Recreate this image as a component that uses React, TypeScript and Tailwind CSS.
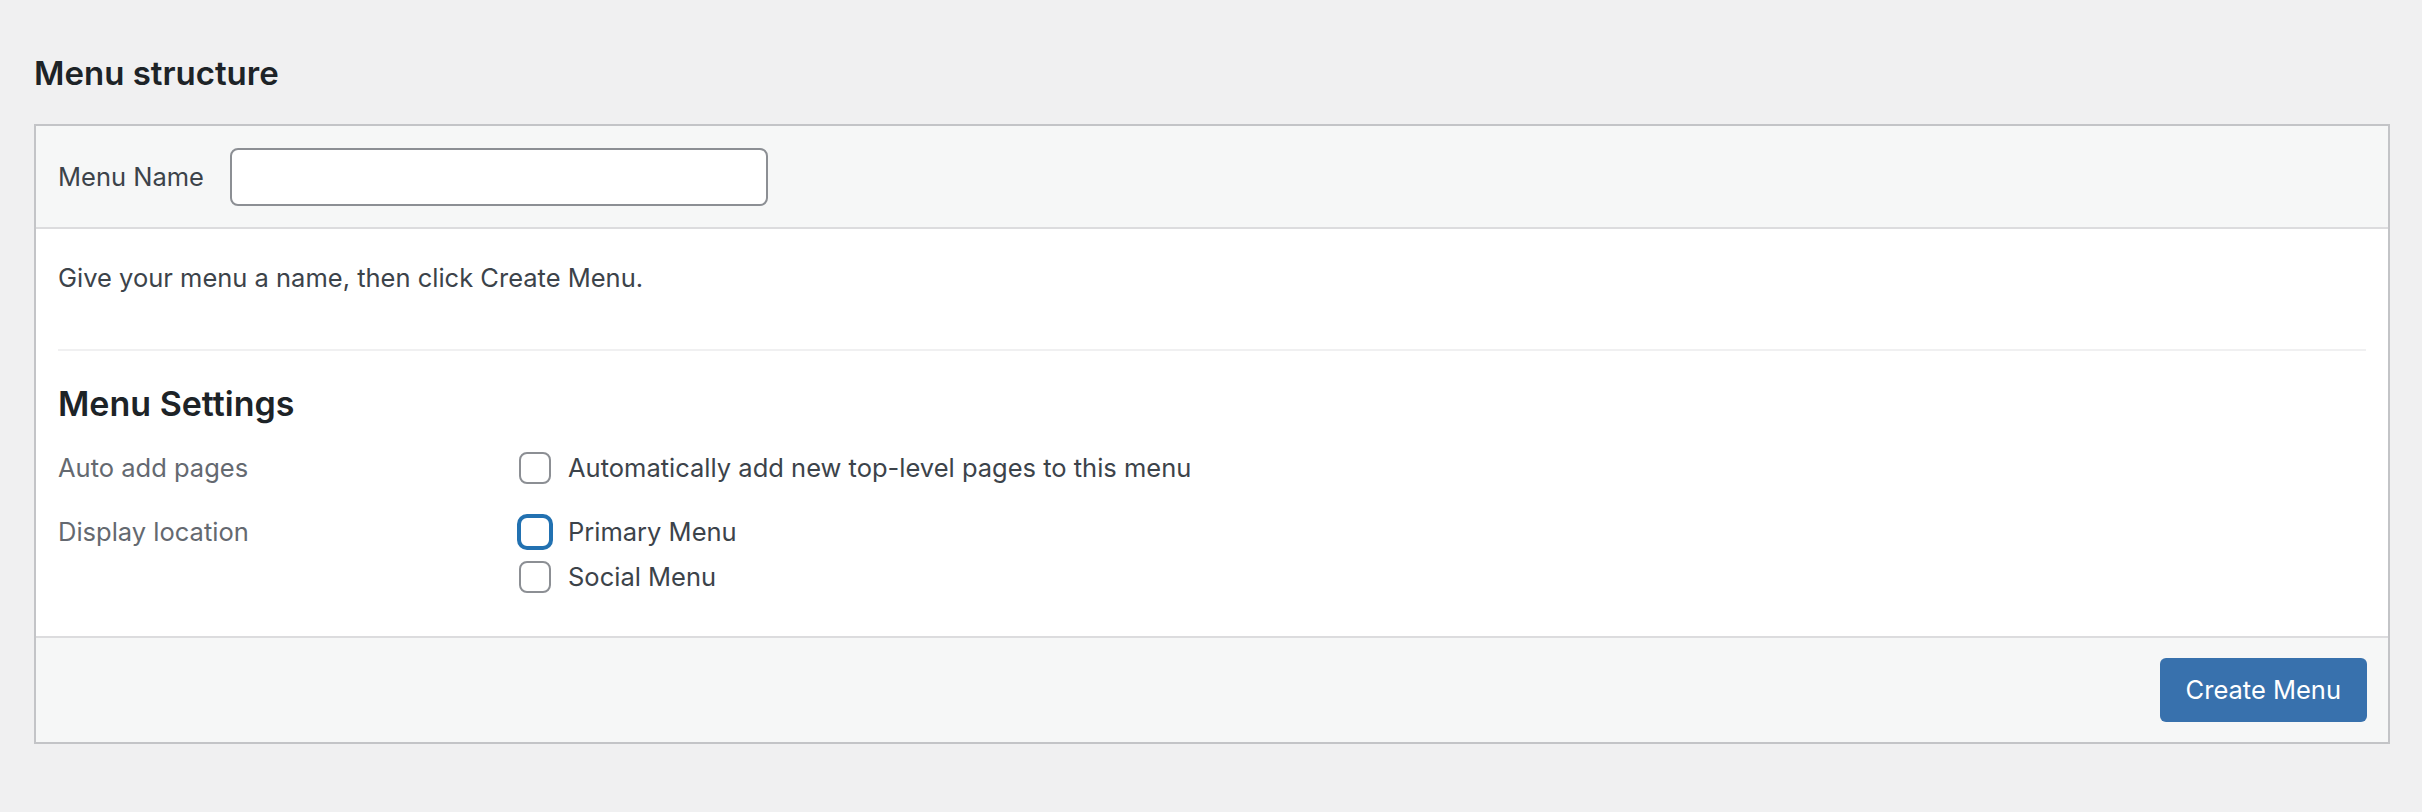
import { useState } from "react";

const font = { fontFamily: "Inter, 'Noto Sans', sans-serif" };

const Checkbox = ({ checked, focused, onChange }: { checked: boolean; focused?: boolean; onChange: () => void }) => (
  <button
    type="button"
    onClick={onChange}
    className={`w-8 h-8 shrink-0 rounded-[8px] bg-white border-2 flex items-center justify-center ${
      focused ? "border-[#2271b1] shadow-[0_0_0_2px_#2271b1]" : "border-[#8c8f94]"
    }`}
  >
    {checked && (
      <svg viewBox="0 0 20 20" className="w-7 h-7 text-[#3582c4]" fill="currentColor">
        <path d="M14.83 4.89l1.34.94-5.81 8.38H9.02L5.78 9.67l1.34-1.25 2.57 2.4z" />
      </svg>
    )}
  </button>
);

export default function App() {
  const [menuName, setMenuName] = useState<string>("");
  const [autoAdd, setAutoAdd] = useState<boolean>(false);
  const [primary, setPrimary] = useState<boolean>(false);
  const [social, setSocial] = useState<boolean>(false);

  return (
    <div className="min-h-screen bg-[#f0f0f1] pl-[34px] pr-[32px] pt-[57px] pb-[40px]" style={font}>
      <h2 className="text-[33px] leading-none font-semibold text-[#1d2327]">Menu structure</h2>

      <div className="mt-[34px] border-2 border-[#c3c4c7] bg-white">
        {/* header */}
        <div className="bg-[#f6f7f7] border-b-2 border-[#dcdcde] px-[22px] pt-[22px] pb-[21px] flex items-center gap-[26px]">
          <label className="text-[25.5px] text-[#3c434a]">Menu Name</label>
          <input
            type="text"
            value={menuName}
            onChange={(e) => setMenuName(e.target.value)}
            className="w-[538px] h-[58px] rounded-[8px] border-2 border-[#8c8f94] bg-white px-4 text-[25.5px] text-[#2c3338] outline-none"
          />
        </div>

        {/* body */}
        <div className="px-[22px] pb-[43px]">
          <p className="mt-[29px] text-[25.5px] leading-[39px] text-[#3c434a]">
            Give your menu a name, then click Create Menu.
          </p>
          <div className="mt-[52px] h-[2px] bg-[#f0f0f1]" />

          <h3 className="mt-[36px] text-[34px] leading-none font-semibold text-[#1d2327]">Menu Settings</h3>

          <div className="mt-[31px] grid grid-cols-[461px_1fr] gap-y-[32px]">
            <div className="text-[25.5px] leading-[32px] text-[#646970]">Auto add pages</div>
            <label className="flex items-center gap-[17px] text-[25.5px] leading-[32px] text-[#3c434a]">
              <Checkbox checked={autoAdd} onChange={() => setAutoAdd(!autoAdd)} />
              Automatically add new top-level pages to this menu
            </label>

            <div className="text-[25.5px] leading-[32px] text-[#646970]">Display location</div>
            <div className="flex flex-col gap-[13px]">
              <label className="flex items-center gap-[17px] text-[25.5px] leading-[32px] text-[#3c434a]">
                <Checkbox checked={primary} focused onChange={() => setPrimary(!primary)} />
                Primary Menu
              </label>
              <label className="flex items-center gap-[17px] text-[25.5px] leading-[32px] text-[#3c434a]">
                <Checkbox checked={social} onChange={() => setSocial(!social)} />
                Social Menu
              </label>
            </div>
          </div>
        </div>

        {/* footer */}
        <div className="bg-[#f6f7f7] border-t-2 border-[#dcdcde] px-[21px] py-[20px] flex justify-end">
          <button
            type="button"
            className="h-[64px] px-[26px] rounded-[6px] bg-[#3871ad] text-white text-[25.5px] leading-none"
          >
            Create Menu
          </button>
        </div>
      </div>
    </div>
  );
}
